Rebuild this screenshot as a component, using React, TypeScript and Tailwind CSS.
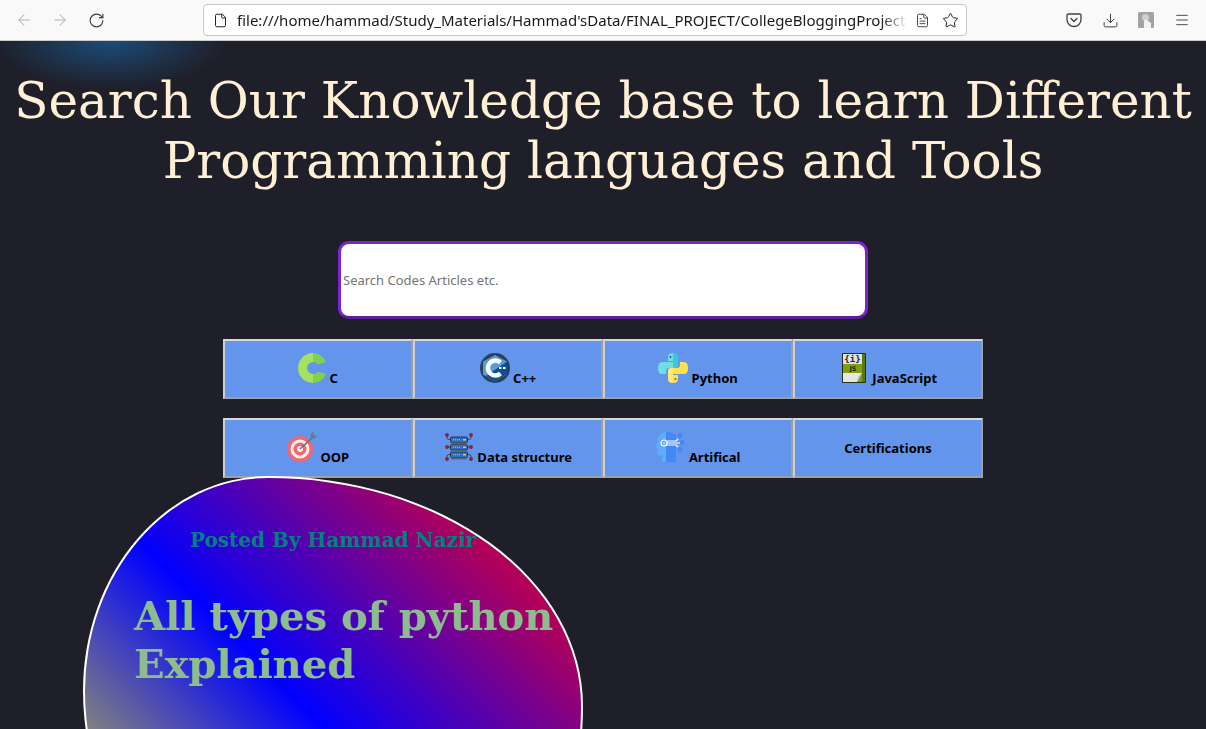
import React from 'react';
import { ArrowLeft, ArrowRight, RotateCw, File, FileText, Star, Download, Menu } from 'lucide-react';

const CIcon = () => (
  <svg width="28" height="30" viewBox="0 0 28 30" className="inline align-baseline">
    <path d="M15 0A15 15 0 0 0 15 30V21A6 6 0 0 1 15 9Z" fill="#a3e35f" />
    <path d="M15 0Q24 0 28 9L20 11.5Q18.5 9 15 9ZM15 30Q24 30 28 21L20 18.5Q18.5 21 15 21Z" fill="#7fcf55" />
  </svg>
);

const CppIcon = () => (
  <svg width="30" height="30" viewBox="0 0 30 30" className="inline align-baseline">
    <circle cx="15" cy="15" r="15" fill="#2b3f55" />
    <path d="M15 2 L27 8.5 V21.5 L15 28.5 L3 21.5 V8.5 Z" fill="#5a9bd8" />
    <path d="M27 8.5 V21.5 L15 28.5 L6 23 Z" fill="#0f4f96" />
    <path d="M20.5 9.5 A7.5 7.5 0 1 0 20.5 20.5" fill="none" stroke="#ffffff" strokeWidth="4.5" />
    <rect x="19" y="14" width="2.5" height="2" fill="#ffffff" />
    <rect x="23" y="14" width="2.5" height="2" fill="#ffffff" />
  </svg>
);

const PythonIcon = () => (
  <svg width="30" height="30" viewBox="0 0 30 30" className="inline align-baseline">
    <path d="M10 8V4Q10 0 15 0V8ZM7 9H15V15H11Q8 15 8 18V21H4Q0 21 0 15Q0 9 4 9Z" fill="#6fdde8" />
    <path d="M15 0Q20 0 20 4V12Q20 15 17 15H15V9H15V0Z" fill="#3fc6da" />
    <path d="M20 22V26Q20 30 15 30V22ZM23 21H15V15H19Q22 15 22 12V9H26Q30 9 30 15Q30 21 26 21Z" fill="#ffe14d" />
    <path d="M15 30Q10 30 10 26V18Q10 15 13 15H15V30Z" fill="#ffeb6b" />
    <circle cx="12.5" cy="4" r="1" fill="#2b5a66" />
    <circle cx="17.5" cy="26" r="1" fill="#7a6a10" />
  </svg>
);

const JsIcon = () => (
  <svg width="30" height="30" viewBox="0 0 30 30" className="inline align-baseline">
    <path d="M3.5 0.5H26.5V29.5H3.5Z" fill="#7f9e12" stroke="#27301a" />
    <rect x="4" y="1" width="19" height="10" fill="#e2e2e2" />
    <rect x="23" y="1" width="3" height="28" fill="#5a7a10" />
    <text x="13.5" y="9" fontSize="9" fontWeight="700" textAnchor="middle" fill="#222" fontFamily="DejaVu Sans Mono, monospace">{'{i}'}</text>
    <text x="14" y="18" fontSize="6.5" fontWeight="700" textAnchor="middle" fill="#1d2a05" fontFamily="DejaVu Sans, sans-serif">JS</text>
    <path d="M4 20H23L18 29H4Z" fill="#e6e6e6" />
    <path d="M18 29L19 24L23 20Z" fill="#bcbcbc" />
  </svg>
);

const OopIcon = () => (
  <svg width="30" height="30" viewBox="0 0 30 30" className="inline align-baseline">
    <circle cx="13" cy="17" r="13" fill="#f4656f" />
    <circle cx="13" cy="17" r="9.5" fill="#f5f0f0" />
    <circle cx="13" cy="17" r="6.5" fill="#f4656f" />
    <circle cx="13" cy="17" r="3" fill="#f5f0f0" />
    <path d="M13 17L25 6" stroke="#6b7280" strokeWidth="1.6" />
    <path d="M23 8L24 1L27 0L26 3L30 4L28 6L23 8Z" fill="#5f7d8c" />
  </svg>
);

const DataIcon = () => (
  <svg width="30" height="30" viewBox="0 0 30 30" className="inline align-baseline" fill="none">
    <path d="M3 3V5.5Q3 7.5 5 7.5H6M27 3V5.5Q27 7.5 25 7.5H24M3 15H6M27 15H24M3 27V24.5Q3 22.5 5 22.5H6M27 27V24.5Q27 22.5 25 22.5H24" stroke="#333" strokeWidth="0.8" />
    <rect x="6.5" y="5" width="17" height="5.5" rx="1" fill="#2a6fc9" stroke="#2d3340" />
    <rect x="6.5" y="12.5" width="17" height="5.5" rx="1" fill="#2a6fc9" stroke="#2d3340" />
    <rect x="6.5" y="20" width="17" height="5.5" rx="1" fill="#2a6fc9" stroke="#2d3340" />
    <rect x="7.5" y="10.5" width="15" height="2" fill="#5b6470" />
    <rect x="7.5" y="18" width="15" height="2" fill="#5b6470" />
    <rect x="7.5" y="25.5" width="15" height="2" fill="#5b6470" />
    <path d="M9 7.7H17M9 15.2H17M9 22.7H17" stroke="#9cc9f5" strokeWidth="1.1" strokeDasharray="1 1" />
    <path d="M19 7.7H22M19 15.2H22M19 22.7H22" stroke="#f2c230" strokeWidth="1.5" />
    <g fill="#b3132b" stroke="#333" strokeWidth="0.4">
      <circle cx="3" cy="3" r="1.7" />
      <circle cx="27" cy="3" r="1.7" />
      <circle cx="3" cy="15" r="1.7" />
      <circle cx="27" cy="15" r="1.7" />
      <circle cx="3" cy="27" r="1.7" />
      <circle cx="27" cy="27" r="1.7" />
    </g>
  </svg>
);

const AiIcon = () => (
  <svg width="30" height="30" viewBox="0 0 30 30" className="inline align-baseline" fill="none">
    <path d="M11 0C6 0 2.5 4 2.5 9.5L0 15L2.5 16.5V21Q2.5 23.5 5 23.5H7V30H11Z" fill="#62aafc" />
    <path d="M11 0Q17 0 21 3V30H11Z" fill="#4189f7" />
    <circle cx="25" cy="3.5" r="2.5" fill="#4189f7" />
    <circle cx="27" cy="10.5" r="2.5" fill="#4189f7" />
    <circle cx="25" cy="17.5" r="2.5" fill="#4189f7" />
    <circle cx="9" cy="11" r="3" stroke="#ffffff" strokeWidth="1.2" />
    <circle cx="9" cy="11" r="0.8" fill="#ffffff" />
    <path d="M12 9H21L23 7M12 11H25M12 13H21L23 15" stroke="#ffffff" strokeWidth="1.2" />
  </svg>
);

const PocketIcon = () => (
  <svg width="16" height="16" viewBox="0 0 16 16" fill="none" stroke="#3f3f46" strokeWidth="1.3">
    <path d="M2.5 2H13.5Q15 2 15 3.5V7.5A7 7 0 0 1 1 7.5V3.5Q1 2 2.5 2Z" />
    <path d="M5 6.5L8 9.5L11 6.5" strokeLinecap="round" strokeLinejoin="round" />
  </svg>
);

const AvatarIcon = () => (
  <svg width="16" height="16" viewBox="0 0 16 16">
    <rect width="16" height="16" rx="1.5" fill="#a2a2a2" />
    <circle cx="7.5" cy="5.5" r="3.5" fill="#cfcfcf" />
    <path d="M6 16V9Q6 7.5 8 7.5T10 9L13 11V16Z" fill="#eef3f8" />
  </svg>
);

const NavButton = ({ label, icon }: { label: string; icon?: React.ReactNode }) => (
  <button className={`h-[60px] border-2 border-t-[#d8d8d8] border-l-[#d0d0d0] border-r-[#a0a0a0] border-b-[#a0a0a0] bg-[#6495ed] text-center text-[13px] font-bold text-black ${icon ? 'pt-1' : 'pt-[2px]'}`}>
    {icon}
    {icon ? ' ' : ''}
    {label}
  </button>
);

export default function App() {
  return (
    <div className="h-[729px] w-[1206px] overflow-hidden bg-[#1f1f29] font-['Noto_Sans',sans-serif]">
      <div className="flex h-[41px] items-center border-b border-[#cccccc] bg-[#f9f9fa] px-[6px]">
        <button className="flex w-9 justify-center text-[#b4b4b6]"><ArrowLeft size={18} strokeWidth={1.4} /></button>
        <button className="flex w-9 justify-center text-[#b4b4b6]"><ArrowRight size={18} strokeWidth={1.4} /></button>
        <button className="flex w-9 justify-center text-[#3f3f46]"><RotateCw size={17} strokeWidth={1.6} /></button>
        <div className="ml-[89px] flex h-[32px] w-[764px] items-center rounded-[4px] border border-[#c8c8c8] bg-white pl-[9px]">
          <File size={15} strokeWidth={1.6} className="text-[#222222]" />
          <div className="ml-[9px] w-[671px] overflow-hidden whitespace-nowrap text-[15px] text-[#1a1a1a] [mask-image:linear-gradient(to_right,black_96%,transparent)]">
            file:///home/hammad/Study_Materials/Hammad'sData/FINAL_PROJECT/CollegeBloggingProject
          </div>
          <FileText size={15} strokeWidth={1.5} className="ml-[7px] text-[#3f3f46]" />
          <Star size={17} strokeWidth={1.4} className="ml-[12px] text-[#222222]" />
        </div>
        <div className="ml-auto flex items-center text-[#3f3f46]">
          <span className="flex w-9 justify-center"><PocketIcon /></span>
          <span className="flex w-9 justify-center"><Download size={17} strokeWidth={1.4} /></span>
          <span className="flex w-9 justify-center"><AvatarIcon /></span>
          <span className="flex w-9 justify-center"><Menu size={16} strokeWidth={1.4} /></span>
        </div>
      </div>

      <div className="bg-[radial-gradient(ellipse_115px_48px_at_110px_0px,#1b4c78,transparent)] pt-[30px]">
        <h1 className="text-center font-['DejaVu_Serif',serif] text-[50px] leading-[60px] text-[#ffefd5]">
          Search Our Knowledge base to learn Different
          <br />
          Programming languages and Tools
        </h1>

        <div className="mt-[50px] flex justify-center">
          <input
            type="text"
            placeholder="Search Codes Articles etc."
            className="h-[78px] w-[530px] rounded-[11px] border-[3px] border-t-[#7c22d6] border-l-[#7c22d6] border-r-[#7c22d6] border-b-[#5f1a9f] bg-white px-[2px] text-[13px] outline-none placeholder:text-[#757575]"
          />
        </div>

        <div className="mx-auto mt-[20px] grid w-[760px] grid-cols-4">
          <NavButton label="C" icon={<CIcon />} />
          <NavButton label="C++" icon={<CppIcon />} />
          <NavButton label="Python" icon={<PythonIcon />} />
          <NavButton label="JavaScript" icon={<JsIcon />} />
        </div>
        <div className="mx-auto mt-[19px] grid w-[760px] grid-cols-4">
          <NavButton label="OOP" icon={<OopIcon />} />
          <NavButton label="Data structure" icon={<DataIcon />} />
          <NavButton label="Artifical" icon={<AiIcon />} />
          <NavButton label="Certifications" />
        </div>

        <div className="relative -mt-[2px] ml-[83px] h-[500px] w-[500px] rounded-[37%_63%_40%_60%/43%_46%_54%_57%] border-2 border-white bg-[linear-gradient(45deg,gray_25%,blue_49%,#b0005a_83%)] pl-[49px] pt-[49px] font-['DejaVu_Serif',serif] font-bold">
          <div className="ml-[56px] text-[20px] leading-[26px] text-[#008080]">Posted By Hammad Nazir</div>
          <div className="mt-[39px] text-[40px] leading-[48px] text-[#8fbc8f]">
            All types of python
            <br />
            Explained
          </div>
        </div>
      </div>
    </div>
  );
}
